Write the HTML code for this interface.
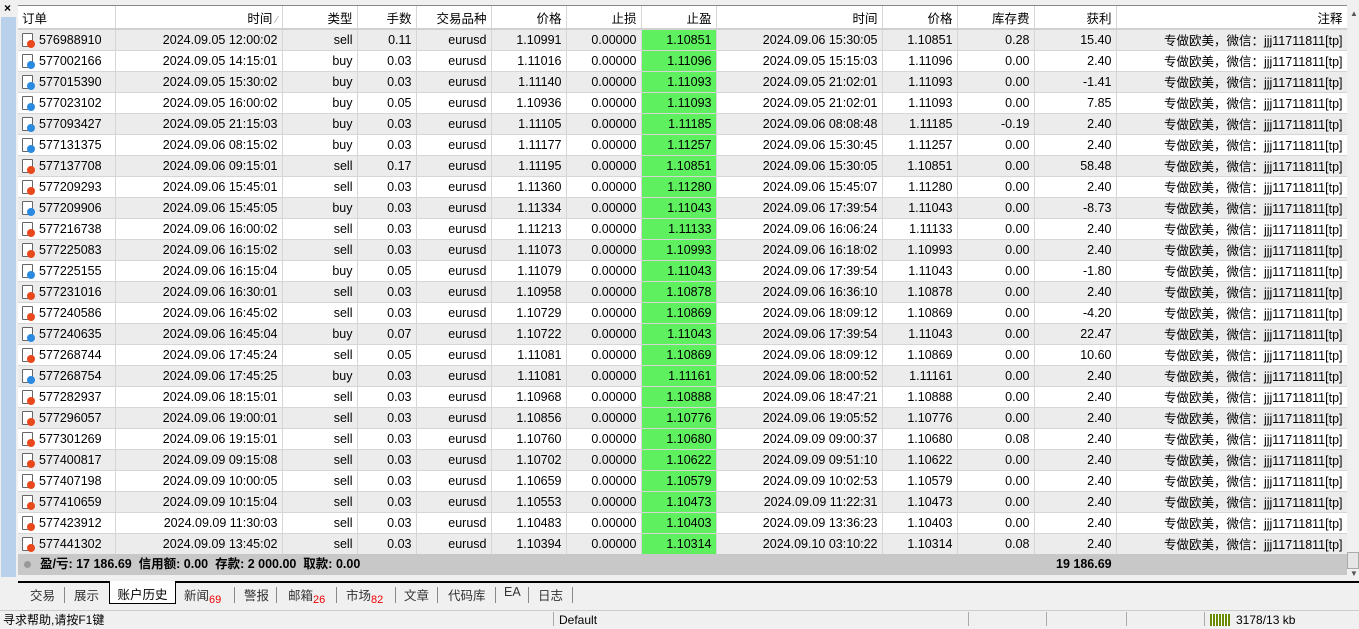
<!DOCTYPE html>
<html><head><meta charset="utf-8"><style>
*{margin:0;padding:0;box-sizing:border-box}
body{width:1359px;height:626px;overflow:hidden;background:#f0f0f0;font-family:"Liberation Sans","Noto Sans CJK SC",sans-serif;font-size:12.5px;color:#000;position:relative}
#left{position:absolute;left:0;top:0;width:18px;height:610px;background:#f0f0f0}
#left .bar{position:absolute;left:1px;top:17px;width:15px;height:560px;background:#b9d1ea}
#left .x{position:absolute;left:4px;top:1px;font-size:12px;font-weight:bold}
#tbl{position:absolute;left:18px;top:5px;width:1329px;background:#fff;border-top:1px solid #888}
table{border-collapse:collapse;table-layout:fixed;width:1329px}
td,th{height:21px;border-right:1px solid #d6d6d6;border-bottom:1px solid #d6d6d6;text-align:right;padding:0 4px;white-space:nowrap;overflow:hidden;font-weight:normal}
th{height:23px;background:#fff;border-bottom:2px solid #d0d0d0}
th:first-child,td:first-child{text-align:left;padding-left:4px}
tr.g td{background:#ececec}
tr td.tp,tr.g td.tp{background:#5ef05e}
.ic{display:inline-block;width:11px;height:14px;border:1px solid #666;background:#fff;border-radius:1px;vertical-align:-3px;margin-right:6px;position:relative}
.ic i{position:absolute;right:-3px;bottom:-2px;width:8px;height:8px;border-radius:50%}
.s i{background:#e8481c}.b i{background:#2a8ae0}
#sum{position:absolute;left:18px;top:554px;width:1329px;height:21px;background:#c8c8c8;font-weight:bold;line-height:21px;padding-left:22px}
#sum .d{position:absolute;left:6px;top:7px;width:7px;height:7px;border-radius:50%;background:#999}
#sum .r{position:absolute;left:1038px;top:0}
#sb{position:absolute;left:1347px;top:5px;width:12px;height:575px;background:#f0f0f0}
#sb .t{position:absolute;left:0;top:547px;width:12px;height:17px;background:#e6e6e6;border:1px solid #aaa}
#tabs{position:absolute;left:18px;top:581px;width:1341px;height:25px;border-top:2px solid #000;background:#f0f0f0}
#tabs span{position:absolute;top:2px;color:#333;font-size:12.5px}
#tabs .sep{width:1px;height:16px;background:#888;top:4px}
#tabs .act{top:-2px;left:91px;width:67px;height:23px;background:#fff;border:1px solid #000;border-top:none;text-align:center;padding-top:3px;color:#000}
#tabs sub{color:#e00;font-size:11px;vertical-align:-3px}
#status{position:absolute;left:0;top:610px;width:1359px;height:16px;background:#f0f0f0;border-top:1px solid #ccc;font-size:12px;line-height:18px}
</style></head><body>
<div id="left"><span class="x">×</span><div class="bar"></div></div>
<div id="tbl"><table>
<colgroup><col style="width:97px"><col style="width:167px"><col style="width:75px"><col style="width:59px"><col style="width:75px"><col style="width:75px"><col style="width:75px"><col style="width:75px"><col style="width:166px"><col style="width:75px"><col style="width:77px"><col style="width:82px"><col style="width:231px"></colgroup>
<tr><th>订单</th><th>时间 <span style="color:#999;font-size:10px">⁄</span></th><th>类型</th><th>手数</th><th>交易品种</th><th>价格</th><th>止损</th><th>止盈</th><th>时间</th><th>价格</th><th>库存费</th><th>获利</th><th>注释</th></tr>
<tbody id="rows"></tbody>
</table></div>
<script>
var d=[
["576988910","2024.09.05 12:00:02","sell","0.11","1.10991","1.10851","2024.09.06 15:30:05","0.28","15.40"],
["577002166","2024.09.05 14:15:01","buy","0.03","1.11016","1.11096","2024.09.05 15:15:03","0.00","2.40"],
["577015390","2024.09.05 15:30:02","buy","0.03","1.11140","1.11093","2024.09.05 21:02:01","0.00","-1.41"],
["577023102","2024.09.05 16:00:02","buy","0.05","1.10936","1.11093","2024.09.05 21:02:01","0.00","7.85"],
["577093427","2024.09.05 21:15:03","buy","0.03","1.11105","1.11185","2024.09.06 08:08:48","-0.19","2.40"],
["577131375","2024.09.06 08:15:02","buy","0.03","1.11177","1.11257","2024.09.06 15:30:45","0.00","2.40"],
["577137708","2024.09.06 09:15:01","sell","0.17","1.11195","1.10851","2024.09.06 15:30:05","0.00","58.48"],
["577209293","2024.09.06 15:45:01","sell","0.03","1.11360","1.11280","2024.09.06 15:45:07","0.00","2.40"],
["577209906","2024.09.06 15:45:05","buy","0.03","1.11334","1.11043","2024.09.06 17:39:54","0.00","-8.73"],
["577216738","2024.09.06 16:00:02","sell","0.03","1.11213","1.11133","2024.09.06 16:06:24","0.00","2.40"],
["577225083","2024.09.06 16:15:02","sell","0.03","1.11073","1.10993","2024.09.06 16:18:02","0.00","2.40"],
["577225155","2024.09.06 16:15:04","buy","0.05","1.11079","1.11043","2024.09.06 17:39:54","0.00","-1.80"],
["577231016","2024.09.06 16:30:01","sell","0.03","1.10958","1.10878","2024.09.06 16:36:10","0.00","2.40"],
["577240586","2024.09.06 16:45:02","sell","0.03","1.10729","1.10869","2024.09.06 18:09:12","0.00","-4.20"],
["577240635","2024.09.06 16:45:04","buy","0.07","1.10722","1.11043","2024.09.06 17:39:54","0.00","22.47"],
["577268744","2024.09.06 17:45:24","sell","0.05","1.11081","1.10869","2024.09.06 18:09:12","0.00","10.60"],
["577268754","2024.09.06 17:45:25","buy","0.03","1.11081","1.11161","2024.09.06 18:00:52","0.00","2.40"],
["577282937","2024.09.06 18:15:01","sell","0.03","1.10968","1.10888","2024.09.06 18:47:21","0.00","2.40"],
["577296057","2024.09.06 19:00:01","sell","0.03","1.10856","1.10776","2024.09.06 19:05:52","0.00","2.40"],
["577301269","2024.09.06 19:15:01","sell","0.03","1.10760","1.10680","2024.09.09 09:00:37","0.08","2.40"],
["577400817","2024.09.09 09:15:08","sell","0.03","1.10702","1.10622","2024.09.09 09:51:10","0.00","2.40"],
["577407198","2024.09.09 10:00:05","sell","0.03","1.10659","1.10579","2024.09.09 10:02:53","0.00","2.40"],
["577410659","2024.09.09 10:15:04","sell","0.03","1.10553","1.10473","2024.09.09 11:22:31","0.00","2.40"],
["577423912","2024.09.09 11:30:03","sell","0.03","1.10483","1.10403","2024.09.09 13:36:23","0.00","2.40"],
["577441302","2024.09.09 13:45:02","sell","0.03","1.10394","1.10314","2024.09.10 03:10:22","0.08","2.40"]];
var h="";d.forEach(function(r,i){h+='<tr'+(i%2==0?' class="g"':'')+'><td><span class="ic '+(r[2]=="sell"?"s":"b")+'"><i></i></span>'+r[0]+'</td><td>'+r[1]+'</td><td>'+r[2]+'</td><td>'+r[3]+'</td><td>eurusd</td><td>'+r[4]+'</td><td>0.00000</td><td class="tp">'+r[5]+'</td><td>'+r[6]+'</td><td>'+r[5]+'</td><td>'+r[7]+'</td><td>'+r[8]+'</td><td>专做欧美，微信：jjj11711811[tp]</td></tr>';});
document.getElementById("rows").innerHTML=h;
</script>
<div id="sum"><span class="d"></span>盈/亏: 17 186.69&nbsp; 信用额: 0.00&nbsp; 存款: 2 000.00&nbsp; 取款: 0.00<span class="r">19 186.69</span></div>
<div id="sb"><div style="position:absolute;top:4px;left:3px;font-size:8px;color:#555">▲</div><div class="t"></div><div style="position:absolute;top:564px;left:3px;font-size:8px;color:#555">▼</div></div>
<div id="tabs">
<span style="left:12px">交易</span><span class="sep" style="left:46px"></span>
<span style="left:56px">展示</span>
<span class="act">账户历史</span>
<span style="left:166px">新闻<sub>69</sub></span><span class="sep" style="left:216px"></span>
<span style="left:226px">警报</span><span class="sep" style="left:258px"></span>
<span style="left:270px">邮箱<sub>26</sub></span><span class="sep" style="left:318px"></span>
<span style="left:328px">市场<sub>82</sub></span><span class="sep" style="left:377px"></span>
<span style="left:386px">文章</span><span class="sep" style="left:419px"></span>
<span style="left:430px">代码库</span><span class="sep" style="left:477px"></span>
<span style="left:486px">EA</span><span class="sep" style="left:510px"></span>
<span style="left:520px">日志</span><span class="sep" style="left:554px"></span>
</div>
<div id="status"><span style="position:absolute;left:3px">寻求帮助,请按F1键</span>
<span style="position:absolute;left:553px;top:1px;width:1px;height:14px;background:#aaa"></span><span style="position:absolute;left:559px">Default</span>
<span style="position:absolute;left:968px;top:1px;width:1px;height:14px;background:#aaa"></span>
<span style="position:absolute;left:1046px;top:1px;width:1px;height:14px;background:#aaa"></span>
<span style="position:absolute;left:1126px;top:1px;width:1px;height:14px;background:#aaa"></span>
<span style="position:absolute;left:1204px;top:1px;width:1px;height:14px;background:#aaa"></span>
<span style="position:absolute;left:1210px;top:3px;width:20px;height:12px;background:repeating-linear-gradient(90deg,#6a8a00 0 2px,#fff 2px 3px)"></span>
<span style="position:absolute;left:1236px">3178/13 kb</span></div>
</body></html>
